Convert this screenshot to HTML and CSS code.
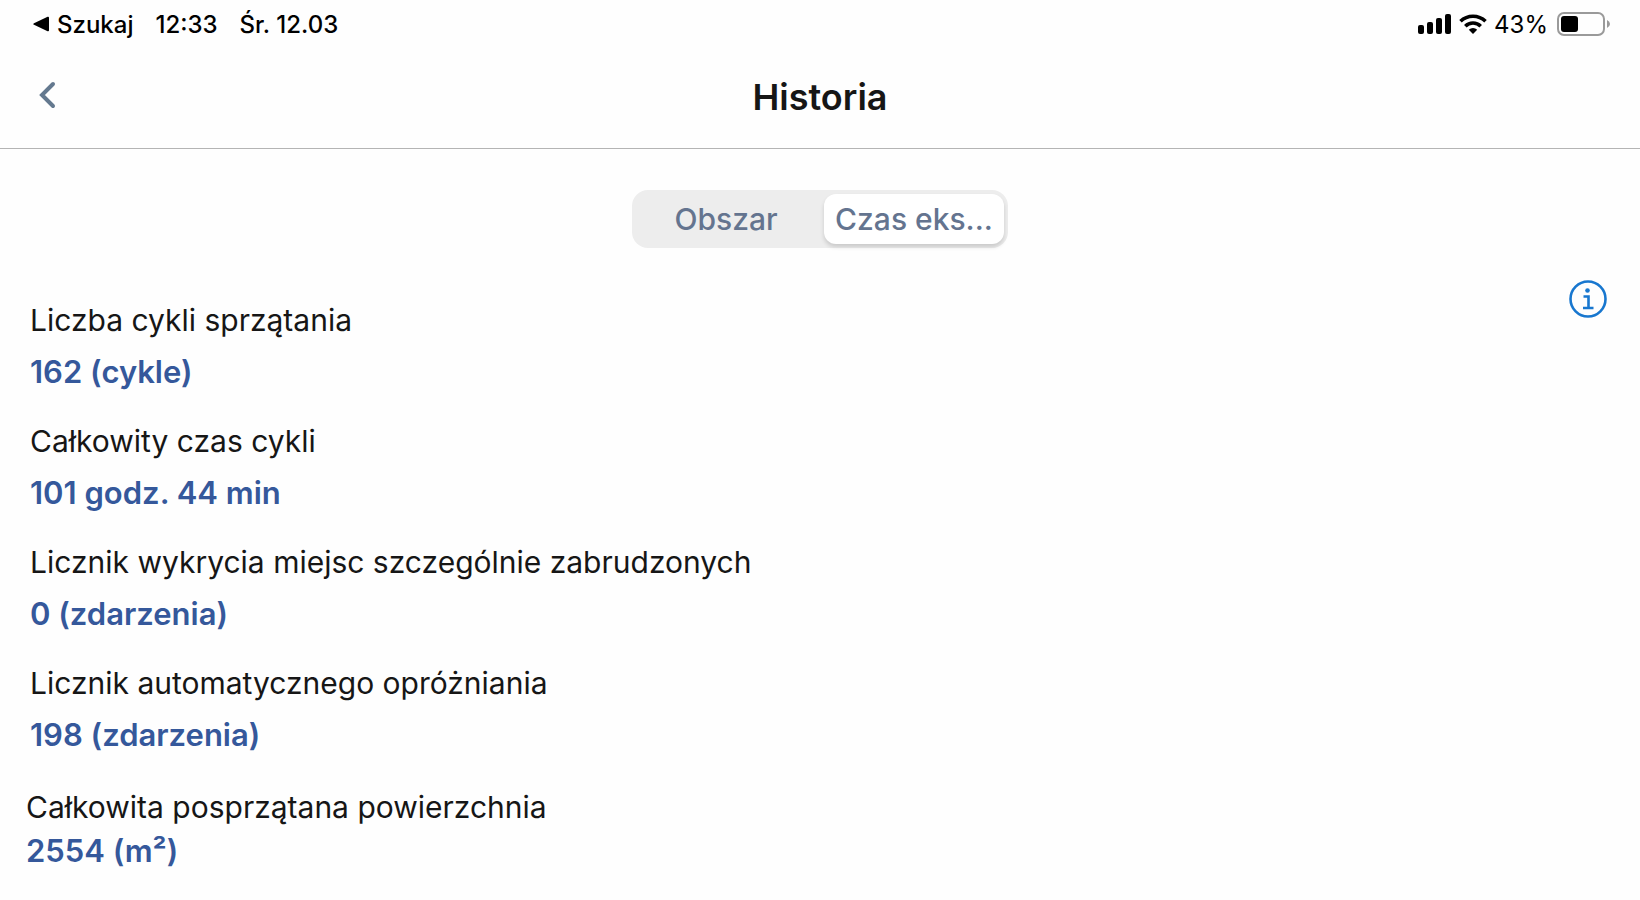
FILE: index.html
```html
<!DOCTYPE html>
<html lang="pl">
<head>
  <meta charset="UTF-8">
  <meta name="viewport" content="width=device-width, initial-scale=1.0">
  <title>Historia</title>
  <link rel="stylesheet" href="styles.css">
</head>
<body>

  <div class="status">
    <div class="status-left">
      <a href="#" class="back-app">
        <svg width="16" height="16" viewBox="0 0 16 16"><path d="M1 7.2 14.6.8Q16 .3 16 1.8v12.4q0 1.5-1.4 1L1 8.8Q-.5 8 1 7.2z"/></svg>
        Szukaj
      </a>
      <span>12:33</span>
      <span>Śr. 12.03</span>
    </div>
    <div class="status-right">
      <svg width="34" height="20" viewBox="0 0 34 20">
        <rect x="0" y="11" width="6" height="9" rx="2"/>
        <rect x="9" y="8" width="6" height="12" rx="2"/>
        <rect x="18" y="4" width="6" height="16" rx="2"/>
        <rect x="27" y="0" width="6" height="20" rx="2"/>
      </svg>
      <svg width="28" height="20" viewBox="0 0 28 20">
        <g fill="none" stroke="#000" stroke-width="3.6">
          <path d="M1.5 7.3a18 18 0 0 1 25 0"/>
          <path d="M6.3 12.2a11 11 0 0 1 15.4 0"/>
        </g>
        <path d="M14 20l-4.200-4.300a6.200 6.200 0 0 1 8.400 0z"/>
      </svg>
      <span>43%</span>
      <svg class="battery" width="53" height="24" viewBox="0 0 53 24">
        <rect x="1" y="1" width="46" height="22" rx="6" fill="none" stroke="#9a9a9a" stroke-width="2"/>
        <rect x="4" y="4" width="17" height="16" rx="3"/>
        <path d="M50 8q3 1.5 3 4t-3 4z" fill="#9a9a9a"/>
      </svg>
    </div>
  </div>

  <header class="header">
    <button class="back" aria-label="Wstecz">
      <svg width="18" height="28" viewBox="0 0 18 28"><path d="M15 3 4 14l11 11" fill="none" stroke="#64798f" stroke-width="4" stroke-linecap="round"/></svg>
    </button>
    <h1>Historia</h1>
  </header>

  <main>
    <div class="tabs">
      <button class="tab">Obszar</button>
      <button class="tab active">Czas eks...</button>
    </div>

    <div class="content">
      <dl class="stats">
        <div class="stat">
          <dt>Liczba cykli sprzątania</dt>
          <dd>162 (cykle)</dd>
        </div>
        <div class="stat">
          <dt>Całkowity czas cykli</dt>
          <dd>101 godz. 44 min</dd>
        </div>
        <div class="stat">
          <dt>Licznik wykrycia miejsc szczególnie zabrudzonych</dt>
          <dd>0 (zdarzenia)</dd>
        </div>
        <div class="stat">
          <dt>Licznik automatycznego opróżniania</dt>
          <dd>198 (zdarzenia)</dd>
        </div>
        <div class="stat total">
          <dt>Całkowita posprzątana powierzchnia</dt>
          <dd>2554 (m²)</dd>
        </div>
      </dl>
      <button class="info" aria-label="Informacje">
        <svg width="38" height="38" viewBox="0 0 38 38">
          <g fill="none" stroke="#1877cf" stroke-width="2.6">
            <circle cx="19" cy="19" r="17.5"/>
            <path d="M14.5 16.5h5v11M14 28h10.5"/>
          </g>
          <circle cx="18.5" cy="10.5" r="2.3" fill="#1877cf"/>
        </svg>
      </button>
    </div>
  </main>

</body>
</html>
```

FILE: styles.css
```css
:root {
  --slate: #64748f;
  --blue: #35589b;
  --text: #161616;
}

* { box-sizing: border-box; }

body {
  margin: 0;
  background-color: #fefefe;
  color: var(--text);
  font-family: 'Inter', 'Liberation Sans', sans-serif;
}

button {
  padding: 0;
  border: none;
  background: none;
  font-family: inherit;
  cursor: pointer;
}

svg { display: block; }

.status {
  display: flex;
  justify-content: space-between;
  height: 48px;
  padding: 0 30px 0 33px;
  color: #000;
  font-size: 24px;
}

.status-left,
.status-right,
.back-app {
  display: flex;
  align-items: center;
}

.status-left {
  gap: 22px;
  font-weight: 500;
}

.status-right { gap: 7px; }

.battery { margin-left: 2px; }

.back-app {
  gap: 8px;
  color: inherit;
  text-decoration: none;
}

.header {
  display: grid;
  grid-template-columns: 1fr auto 1fr;
  align-items: center;
  height: 101px;
  padding: 0 38px 2px;
  border-bottom: 1px solid #b4b4b4;
}

.back {
  justify-self: start;
  padding-bottom: 4px;
}

h1 {
  margin: 0;
  font-size: 36px;
  font-weight: 600;
  line-height: 44px;
}

.tabs {
  display: grid;
  grid-template-columns: 1fr 1fr;
  gap: 8px;
  width: 376px;
  margin: 41px auto 0;
  padding: 4px;
  border-radius: 16px;
  background-color: #ededed;
}

.tab {
  height: 50px;
  border-radius: 12px;
  color: var(--slate);
  font-size: 30px;
  font-weight: 500;
  white-space: nowrap;
}

.tab.active {
  background-color: #fff;
  box-shadow: 0 3px 4px rgba(0, 0, 0, 0.15);
}

.content {
  display: flex;
  justify-content: space-between;
  align-items: flex-start;
  padding: 32px 33px 24px 26px;
}

.stats {
  margin: 14px 0 0;
  font-size: 30px;
  line-height: 52px;
}

.stat {
  margin-bottom: 17px;
  padding-left: 4px;
}

.stat dd {
  margin: 0;
  color: var(--blue);
  font-size: 31px;
  font-weight: 600;
}

.stat.total {
  margin: 24px 0 0;
  padding-left: 0;
  line-height: 44px;
}
```
